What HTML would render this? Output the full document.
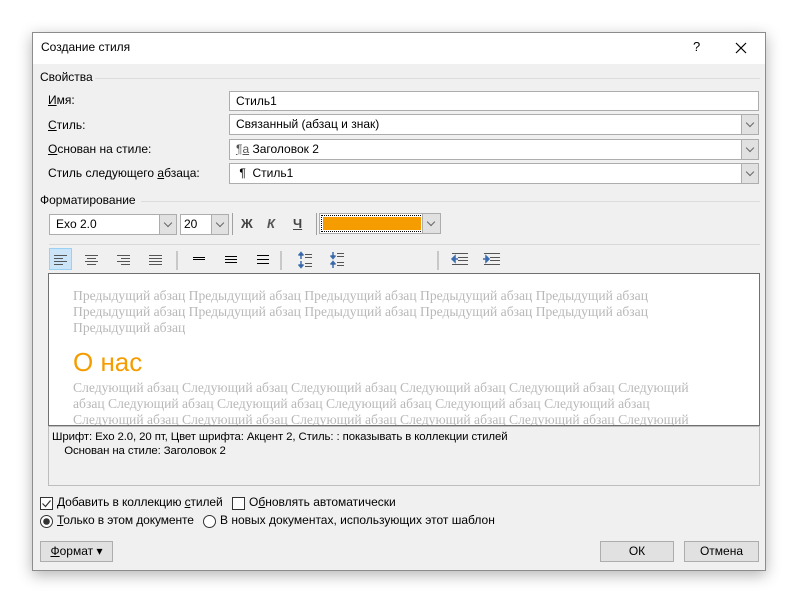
<!DOCTYPE html>
<html><head><meta charset="utf-8"><style>
*{box-sizing:border-box;margin:0;padding:0}
body{width:798px;height:603px;background:#fff;position:relative;overflow:hidden;font-family:"Segoe UI","Liberation Sans","DejaVu Sans",sans-serif;font-size:12px;color:#000}
.a{position:absolute}
#dlg{left:32px;top:32px;width:734px;height:539px;background:#f0f0f0;border:1px solid #8c8c8c;box-shadow:0 4px 14px rgba(0,0,0,.3)}
.title{left:0;top:0;width:732px;height:31px;background:#fff}
.f{background:#fff;border:1px solid #adadad;height:20px;padding:2px 6px;font-size:12px;line-height:14px}
.dd{position:absolute;right:0;top:0;width:17px;height:18px;background:#e1e1e1;border-left:1px solid #adadad}
.dd:after{content:"";position:absolute;left:5px;top:5px;width:5px;height:5px;border-right:1px solid #666;border-bottom:1px solid #666;transform:rotate(45deg)}
.grp{height:1px;background:#dcdcdc}
.sep{width:1px;background:#a0a0a0}
.btn{background:#e1e1e1;border:1px solid #adadad;text-align:center;line-height:19px;height:21px}
.prev{font-family:"Liberation Serif",serif;color:#b8b8b8;font-size:13.6px;line-height:16px}
u{text-decoration:underline}
</style></head><body>
<div id="dlg" class="a">
<div class="a title"></div>
<div class="a" style="left:8px;top:7px;font-size:12px">Создание стиля</div>
<div class="a" style="left:660px;top:6px;font-size:13px">?</div>
<svg class="a" style="left:702px;top:9px" width="12" height="12"><path d="M1 1L11 11M11 1L1 11" stroke="#000" stroke-width="1.2"/></svg>

<div class="a" style="left:7px;top:37px">Свойства</div>
<div class="a grp" style="left:62px;top:45px;width:665px"></div>
<div class="a" style="left:15px;top:60px"><u>И</u>мя:</div>
<div class="a" style="left:15px;top:85px"><u>С</u>тиль:</div>
<div class="a" style="left:15px;top:109px"><u>О</u>снован на стиле:</div>
<div class="a" style="left:15px;top:133px">Стиль следующего <u>а</u>бзаца:</div>
<div class="a f" style="left:196px;top:58px;width:530px">Стиль1</div>
<div class="a f" style="left:196px;top:81px;width:530px;height:21px">Связанный (абзац и знак)<div class="dd" style="height:19px"></div></div>
<div class="a f" style="left:196px;top:106px;width:530px;height:21px"><span style="text-decoration:underline;color:#555">¶a</span> Заголовок 2<div class="dd" style="height:19px"></div></div>
<div class="a f" style="left:196px;top:130px;width:530px;height:21px">&nbsp;¶&nbsp; Стиль1<div class="dd" style="height:19px"></div></div>

<div class="a" style="left:7px;top:160px">Форматирование</div>
<div class="a grp" style="left:108px;top:168px;width:619px"></div>
<div class="a f" style="left:16px;top:181px;width:128px;height:21px">Exo 2.0<div class="dd" style="height:19px"></div></div>
<div class="a f" style="left:147px;top:181px;width:49px;height:21px;padding-left:3px">20<div class="dd" style="height:19px"></div></div>
<div class="a sep" style="left:199px;top:180px;height:22px"></div>
<div class="a" style="left:208px;top:183px;font-weight:bold;color:#444;font-size:13px">Ж</div>
<div class="a" style="left:234px;top:183px;font-weight:bold;font-style:italic;color:#555;font-size:13px">К</div>
<div class="a" style="left:260px;top:183px;font-weight:bold;color:#444;font-size:13px;text-decoration:underline">Ч</div>
<div class="a sep" style="left:283px;top:180px;height:22px"></div>
<div class="a" style="left:286px;top:180px;width:122px;height:21px;background:#fff;border:1px solid #adadad">
 <div class="a" style="left:1px;top:1px;width:102px;height:17px;border:1px dotted #000"></div>
 <div class="a" style="left:3px;top:3px;width:98px;height:13px;background:#f59c00"></div>
 <div class="dd" style="height:19px;width:18px"></div></div>
<div class="a grp" style="left:16px;top:211px;width:711px;background:#d8d8d8"></div>

<div class="a" style="left:16px;top:215px;width:23px;height:22px;background:#cce4f7;border:1px solid #99d1f5"></div>
<svg class="a" style="left:16px;top:215px" width="430" height="22" stroke-width="1">
<g stroke="#555"><path d="M5 7.5h13M5 10.5h9M5 13.5h13M5 16.5h9"/>
<path d="M36 7.5h13M38 10.5h9M36 13.5h13M38 16.5h9"/>
<path d="M68 7.5h13M72 10.5h9M68 13.5h13M72 16.5h9"/>
<path d="M100 7.5h13M100 10.5h13M100 13.5h13M100 16.5h13"/></g>
<g stroke="#000"><path d="M144 9.5h12M144 11.5h12"/><path d="M176 8.5h12M176 11.5h12M176 14.5h12"/><path d="M208 7.5h12M208 11.5h12M208 15.5h12"/></g>
<path d="M128 3v20M232 3v20M389 3v20" stroke="#a0a0a0"/>
<g stroke="#3a6cb0" stroke-width="1.5"><path d="M252 5v6M249.5 7.5l2.5-3 2.5 3M252 13v6M249.5 16.5l2.5 3 2.5-3"/>
<path d="M284 4v6M281.5 7.5l2.5 3 2.5-3M284 14v6M281.5 16.5l2.5-3 2.5 3"/></g>
<g stroke="#555"><path d="M256 6.5h7M256 9.5h7M256 15.5h7M256 18.5h7M288 5.5h7M288 8.5h7M288 14.5h7M288 17.5h7"/></g>
</svg>
<svg class="a" style="left:414px;top:215px" width="60" height="22">
<g stroke="#555"><path d="M5 5.5h16M11 9.5h10M11 12.5h10M5 16.5h16M37 5.5h16M43 9.5h10M43 12.5h10M37 16.5h16"/></g>
<g stroke="#3a6cb0" stroke-width="1.5" fill="#3a6cb0"><path d="M5 11h6M8 8l-3 3 3 3z"/><path d="M36 11h6M39 8l3 3-3 3z"/></g>
</svg>

<div class="a" style="left:15px;top:240px;width:712px;height:153px;background:#fff;border:1px solid #707070;overflow:hidden">
<div class="a prev" style="left:24px;top:14px;width:680px">Предыдущий абзац Предыдущий абзац Предыдущий абзац Предыдущий абзац Предыдущий абзац<br>Предыдущий абзац Предыдущий абзац Предыдущий абзац Предыдущий абзац Предыдущий абзац<br>Предыдущий абзац</div>
<div class="a" style="left:24px;top:73px;color:#f59c00;font-size:26px;font-family:'Liberation Sans Narrow','Liberation Sans',sans-serif">О нас</div>
<div class="a prev" style="left:24px;top:106px;width:690px">Следующий абзац Следующий абзац Следующий абзац Следующий абзац Следующий абзац Следующий<br>абзац Следующий абзац Следующий абзац Следующий абзац Следующий абзац Следующий абзац<br>Следующий абзац Следующий абзац Следующий абзац Следующий абзац Следующий абзац Следующий</div>
</div>
<div class="a" style="left:15px;top:393px;width:712px;height:60px;border:1px solid #bdbdbd;background:#f0f0f0">
<div class="a" style="left:3px;top:3px;line-height:14px;font-size:11.4px;letter-spacing:-0.1px">Шрифт: Exo 2.0, 20 пт, Цвет шрифта: Акцент 2, Стиль: : показывать в коллекции стилей<br>&nbsp;&nbsp;&nbsp;&nbsp;Основан на стиле: Заголовок 2</div></div>

<svg class="a" style="left:7px;top:464px" width="13" height="13"><rect x=".5" y=".5" width="12" height="12" fill="#fff" stroke="#333"/><path d="M2.5 6.5l3 3 5-6" stroke="#333" fill="none" stroke-width="1.2"/></svg>
<div class="a" style="left:24px;top:462px;letter-spacing:-0.1px">Добавить в коллекцию <u>с</u>тилей</div>
<svg class="a" style="left:199px;top:464px" width="13" height="13"><rect x=".5" y=".5" width="12" height="12" fill="#fff" stroke="#333"/></svg>
<div class="a" style="left:216px;top:462px">О<u>б</u>новлять автоматически</div>
<svg class="a" style="left:7px;top:482px" width="13" height="13"><circle cx="6.5" cy="6.5" r="6" fill="#fff" stroke="#333"/><circle cx="6.5" cy="6.5" r="3.3" fill="#333"/></svg>
<div class="a" style="left:24px;top:480px;letter-spacing:-0.1px"><u>Т</u>олько в этом документе</div>
<svg class="a" style="left:170px;top:482px" width="13" height="13"><circle cx="6.5" cy="6.5" r="6" fill="#fff" stroke="#333"/></svg>
<div class="a" style="left:187px;top:480px">В новых документах, использующих этот шаблон</div>

<div class="a btn" style="left:7px;top:508px;width:73px"><u>Ф</u>ормат ▾</div>
<div class="a btn" style="left:567px;top:508px;width:74px">ОК</div>
<div class="a btn" style="left:651px;top:508px;width:75px">Отмена</div>
</div>
</body></html>
